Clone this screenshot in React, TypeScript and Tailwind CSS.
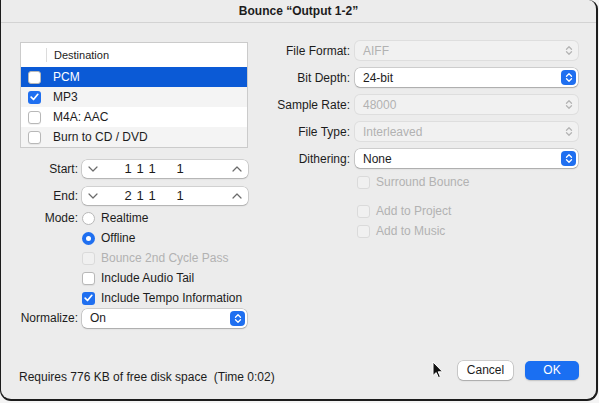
import React from 'react'
import clsx from 'clsx'

type Dest = { name: string; checked: boolean }

const destinations: Dest[] = [
  { name: 'PCM', checked: false },
  { name: 'MP3', checked: true },
  { name: 'M4A: AAC', checked: false },
  { name: 'Burn to CD / DVD', checked: false },
]

const UpDown = ({ className }: { className?: string }) => (
  <svg width="8" height="11" viewBox="0 0 8 11" fill="none" className={className}>
    <path d="M1.5 4.2 L4 1.7 L6.5 4.2 M1.5 6.8 L4 9.3 L6.5 6.8" stroke="currentColor" strokeWidth="1.3" strokeLinecap="round" strokeLinejoin="round" />
  </svg>
)

const Chevron = ({ up }: { up?: boolean }) => (
  <svg width="10" height="6" viewBox="0 0 10 6" fill="none" className="text-[#6b6b6b]">
    <path d={up ? 'M1 5 L5 1 L9 5' : 'M1 1 L5 5 L9 1'} stroke="currentColor" strokeWidth="1.2" strokeLinecap="round" strokeLinejoin="round" />
  </svg>
)

const Checkbox = ({ checked, disabled }: { checked?: boolean; disabled?: boolean }) =>
  checked ? (
    <span className="flex items-center justify-center w-[13px] h-[13px] rounded-[3px] bg-[#1f6ff0] shrink-0">
      <svg width="9" height="8" viewBox="0 0 9 8" fill="none">
        <path d="M1.2 4.2 L3.5 6.5 L7.8 1.3" stroke="white" strokeWidth="1.7" strokeLinecap="round" strokeLinejoin="round" />
      </svg>
    </span>
  ) : (
    <span
      className={clsx(
        'w-[13px] h-[13px] rounded-[3px] border shrink-0',
        disabled ? 'border-[#dadada] bg-[#f0f0f0]' : 'border-[#b8b8b8] bg-white shadow-[0_1px_1px_rgba(0,0,0,0.06)]'
      )}
    />
  )

const Radio = ({ checked }: { checked?: boolean }) =>
  checked ? (
    <span className="flex items-center justify-center w-[13px] h-[13px] rounded-full bg-[#1f6ff0] shrink-0">
      <span className="w-[5px] h-[5px] rounded-full bg-white" />
    </span>
  ) : (
    <span className="w-[13px] h-[13px] rounded-full border border-[#b8b8b8] bg-white shrink-0" />
  )

const Popup = ({ value, disabled, width }: { value: string; disabled?: boolean; width: string }) => (
  <div
    className={clsx(
      'flex items-center h-[19px] rounded-[5px] pl-[8px] pr-[2px]',
      width,
      disabled
        ? 'bg-[#f1f1f1] text-[#b2b2b2] shadow-[0_0_0_1px_rgba(0,0,0,0.06)]'
        : 'bg-white shadow-[0_0_0_0.5px_rgba(0,0,0,0.25),0_1px_1.5px_rgba(0,0,0,0.18)]'
    )}
  >
    <span className="flex-1">{value}</span>
    {disabled ? (
      <span className="flex items-center justify-center w-[15px] h-[15px] text-[#b5b5b5]">
        <UpDown />
      </span>
    ) : (
      <span className="flex items-center justify-center w-[15px] h-[15px] rounded-[4px] bg-[#1f6ff0] text-white">
        <UpDown />
      </span>
    )}
  </div>
)

const PositionField = ({ bar }: { bar: string }) => (
  <div className="flex items-center w-[166px] h-[18px] rounded-[5px] bg-white pl-[6px] pr-[6px] text-[13px] shadow-[0_0_0_0.5px_rgba(0,0,0,0.22),0_1px_1.5px_rgba(0,0,0,0.16)]">
    <Chevron />
    <div className="flex ml-[24px]">
      <span className="w-[12px] text-center">{bar}</span>
      <span className="w-[12px] text-center">1</span>
      <span className="w-[12px] text-center">1</span>
      <span className="w-[12px] text-center ml-[16px]">1</span>
    </div>
    <span className="ml-auto">
      <Chevron up />
    </span>
  </div>
)

const FormRow = ({ label, className, children }: { label?: string; className?: string; children: React.ReactNode }) => (
  <div className={clsx('flex items-center', className)}>
    <span className="w-[58px] text-right whitespace-nowrap">{label}</span>
    <div className="flex items-center ml-[4px]">{children}</div>
  </div>
)

const OptionRow = ({ className, disabled, children }: { className?: string; disabled?: boolean; children: React.ReactNode }) => (
  <div className={clsx('flex items-center gap-[6px] h-[20px] whitespace-nowrap', disabled && 'text-[#b2b2b2]', className)}>{children}</div>
)

const SettingRow = ({ label, children }: { label: string; children: React.ReactNode }) => (
  <div className="flex items-center">
    <span className="w-[88px] text-right whitespace-nowrap">{label}</span>
    <div className="ml-[5px]">{children}</div>
  </div>
)

const App = () => {
  return (
    <div className="w-[599px] h-[403px] bg-[#f4f4f4] font-['Liberation_Sans',Arial,sans-serif] text-[12px] leading-[16px] text-[#1c1c1c]">
      <div className="relative flex flex-col w-[598px] h-[401px] bg-[#ececec] border-l border-r-2 border-b-2 border-[#1c1c1c] rounded-b-[11px] rounded-tr-[9px] overflow-hidden">
        <div className="flex items-center justify-center h-[23px] border-b border-[#d3d3d3] font-bold">
          Bounce “Output 1-2”
        </div>

        <div className="flex pl-[19px] pr-[18px] pt-[18px]">
          {/* destination list and range / mode options */}
          <div className="w-[228px] pt-[1px]">
            <div className="border border-[#cbcbcb] bg-white">
              <div className="flex items-center h-[24px]">
                <span className="w-[25px]" />
                <span className="w-px h-[14px] bg-[#dcdcdc]" />
                <span className="pl-[7px] text-[11px]">Destination</span>
              </div>
              {destinations.map((d, i) => (
                <div
                  key={d.name}
                  className={clsx(
                    'flex items-center gap-[12px] h-[20px] pl-[7px]',
                    i === 0 ? 'bg-[#0b5ad6] text-white' : i % 2 === 1 ? 'bg-[#f4f4f4]' : 'bg-white'
                  )}
                >
                  <Checkbox checked={d.checked} />
                  <span>{d.name}</span>
                </div>
              ))}
            </div>

            <FormRow label="Start:" className="mt-[12px] h-[18px]">
              <PositionField bar="1" />
            </FormRow>
            <FormRow label="End:" className="mt-[9px] h-[18px]">
              <PositionField bar="2" />
            </FormRow>
            <FormRow label="Mode:" className="mt-[3px] h-[20px]">
              <OptionRow>
                <Radio />
                <span>Realtime</span>
              </OptionRow>
            </FormRow>
            <FormRow>
              <OptionRow>
                <Radio checked />
                <span>Offline</span>
              </OptionRow>
            </FormRow>
            <FormRow>
              <OptionRow disabled>
                <Checkbox disabled />
                <span>Bounce 2nd Cycle Pass</span>
              </OptionRow>
            </FormRow>
            <FormRow>
              <OptionRow>
                <Checkbox />
                <span>Include Audio Tail</span>
              </OptionRow>
            </FormRow>
            <FormRow>
              <OptionRow>
                <Checkbox checked />
                <span>Include Tempo Information</span>
              </OptionRow>
            </FormRow>
            <FormRow label="Normalize:" className="h-[20px]">
              <Popup value="On" width="w-[165px]" />
            </FormRow>
          </div>

          {/* file settings */}
          <div className="ml-[14px] flex-1 flex flex-col">
            <div className="flex flex-col gap-[8px]">
              <SettingRow label="File Format:">
                <Popup value="AIFF" disabled width="w-[223px]" />
              </SettingRow>
              <SettingRow label="Bit Depth:">
                <Popup value="24-bit" width="w-[223px]" />
              </SettingRow>
              <SettingRow label="Sample Rate:">
                <Popup value="48000" disabled width="w-[223px]" />
              </SettingRow>
              <SettingRow label="File Type:">
                <Popup value="Interleaved" disabled width="w-[223px]" />
              </SettingRow>
              <SettingRow label="Dithering:">
                <Popup value="None" width="w-[223px]" />
              </SettingRow>
            </div>
            <div className="ml-[95px] mt-[4px]">
              <OptionRow disabled className="gap-[4px]">
                <Checkbox disabled />
                <span>Surround Bounce</span>
              </OptionRow>
              <OptionRow disabled className="gap-[4px] mt-[9px]">
                <Checkbox disabled />
                <span>Add to Project</span>
              </OptionRow>
              <OptionRow disabled className="gap-[4px]">
                <Checkbox disabled />
                <span>Add to Music</span>
              </OptionRow>
            </div>
          </div>
        </div>

        <div className="mt-auto flex items-center pl-[18px] pr-[17px] pb-[14px]">
          <span className="pt-[14px] whitespace-pre">Requires 776 KB of free disk space  (Time 0:02)</span>
          <button className="ml-auto w-[55px] h-[19px] rounded-[5px] bg-white shadow-[0_0_0_0.5px_rgba(0,0,0,0.25),0_1px_1.5px_rgba(0,0,0,0.18)]">
            Cancel
          </button>
          <button className="ml-[12px] w-[54px] h-[19px] rounded-[5px] bg-[#1a6ff2] text-white shadow-[0_1px_1.5px_rgba(0,0,0,0.18)]">
            OK
          </button>
        </div>

        {/* mouse pointer */}
        <svg width="12" height="18" viewBox="0 0 12 18" className="absolute left-[431px] top-[361px]">
          <path d="M1 1 L1 14.5 L4.2 11.6 L6.4 16.6 L8.4 15.7 L6.2 10.8 L10.6 10.8 Z" fill="#111" stroke="white" strokeWidth="1" strokeLinejoin="round" />
        </svg>
      </div>
    </div>
  )
}

export default App
